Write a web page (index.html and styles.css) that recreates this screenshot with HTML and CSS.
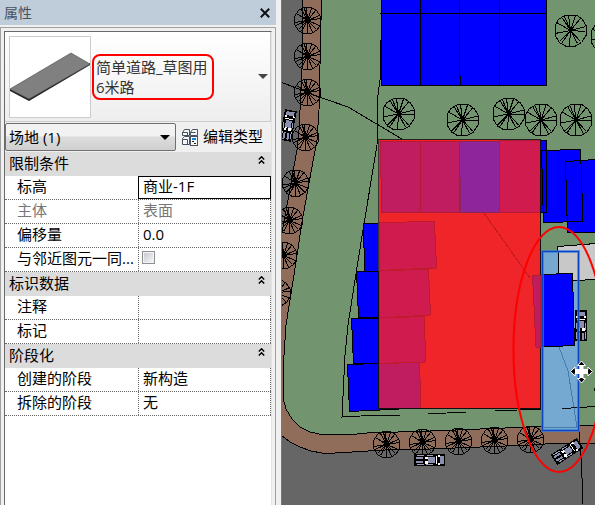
FILE: index.html
```html
<!DOCTYPE html>
<html lang="zh-CN">
<head>
<meta charset="utf-8">
<title>属性</title>
<link rel="stylesheet" href="styles.css">
</head>
<body>
<div class="app">
  <aside class="panel">
    <header class="titlebar"><span>属性</span>
      <svg class="close" width="10" height="10" viewBox="0 0 10 10"><path d="M.8.8 9.2 9.2M9.2.8.8 9.2" stroke="#111" stroke-width="2"/></svg>
    </header>
    <div class="frame"><div class="content">
      <section class="type">
        <svg class="thumb" width="82" height="82" viewBox="0 0 82 82"><rect x=".5" y=".5" width="81" height="81" fill="#fff" stroke="#ccc"/><path d="M1 53v2l19 10 61-36v-2L20 62z" fill="#222"/><path d="M1 53 62 17 81 28 20 63z" fill="#808080" stroke="#555" stroke-width=".7"/></svg>
        <div class="typename"><span>简单道路_草图用</span><span>6米路</span></div>
        <svg class="drop" width="10" height="5"><path d="M0 0h10L5 5z" fill="#444"/></svg>
      </section>
      <section class="filter">
        <div class="combo"><span>场地 (1)</span><svg width="10" height="5"><path d="M0 0h10L5 5z" fill="#000"/></svg></div>
        <svg class="editicon" width="17" height="17" viewBox="0 0 17 17"><g fill="#f5f7f9" stroke="#48525e"><path d="M.5 3.5 2.5.5h5v6H.5zM.5 3.5h5v3M8.5 3.5l2-3h5v6h-7zM8.5 3.500h5M.5 9.500l2-2h5v8h-7zM.5 10.500h5v5"/><rect x="8.500" y="7.500" width="7" height="9"/></g><path d="M10 9h4v2h-4z" fill="#1684d4"/><path d="M10 12h2v1h-2zM12 14h2v1h-2z" fill="#222"/></svg>
        <span>编辑类型</span>
      </section>
      <div class="cat"><span>限制条件</span><svg class="chev" width="7" height="8"><path d="M.8 3.5 3.5.8l2.7 2.7M.8 7.5l2.7-2.7 2.7 2.7"/></svg></div>
      <div class="row"><span>标高</span><span class="active">商业-1F</span></div>
      <div class="row muted"><span>主体</span><span>表面</span></div>
      <div class="row"><span>偏移量</span><span>0.0</span></div>
      <div class="row"><span>与邻近图元一同...</span><span class="checkcell"><i class="check"></i></span></div>
      <div class="cat"><span>标识数据</span><svg class="chev" width="7" height="8"><path d="M.8 3.5 3.5.8l2.7 2.7M.8 7.5l2.7-2.7 2.7 2.7"/></svg></div>
      <div class="row"><span>注释</span><span></span></div>
      <div class="row"><span>标记</span><span></span></div>
      <div class="cat"><span>阶段化</span><svg class="chev" width="7" height="8"><path d="M.8 3.5 3.5.8l2.7 2.7M.8 7.5l2.7-2.7 2.7 2.7"/></svg></div>
      <div class="row"><span>创建的阶段</span><span>新构造</span></div>
      <div class="row"><span>拆除的阶段</span><span>无</span></div>
    </div></div>
  </aside>
  <svg class="map" width="314" height="505" viewBox="281 0 314 505" shape-rendering="crispEdges">
    <defs>
      <g id="tree" fill="none" stroke="#000"><path d="M-5-15.5H6L12-11 15.5-5V5L11 12 5 15.5H-5L-11 12-15.5 5V-5L-12-11zM0 0-2-15.5M0 0-6-14M0 0-8-12.5M0 0 5-15M0 0 10-12M0 0-14-8M0 0 15-4M0 0 15 1M0 0-15.5 3M0 0-11 11M0 0-9 13M0 0-1 15.5M0 0 7 13M0 0 10 11M-2-3 3 3M3-3-3 3"/></g>
      <g id="road-tree" fill="none" stroke="#000"><path d="M-4-13H4L9-10 13-4V4L10 9 4 13H-4L-9 10-13 4V-4L-9-10zM0 0-1-13M0 0-3-12M0 0-6-11M0 0 4-12M0 0 8-10M0 0-11-7M0 0 12-5M0 0 13-2M0 0 12 5M0 0-13 2M0 0-12 5M0 0-9 9M0 0-6 11M0 0 0 13M0 0 5 12M0 0 9 9M-3-3 3 3M3-2-3 3"/></g>
      <g id="car"><rect x="-15.5" y="-6" width="31" height="12" fill="#000"/><path d="M-14-3h7v2h-7zM-14 1h7v2h-7zM-2-3h7v6h-7zM10-4h4v8h-4z" fill="#8b90ae"/><path d="M-5-3h3v2h-3zM-5 1h3v3h-3zM6-4h1v8H6zM8-5h2v2H8zM8 3h2v2H8z" fill="#fff"/><path d="M-13-4.500h7M-3-4.500h6M-13 4.500h7M-4 4.500h7" stroke="#9b9fba"/></g>
    </defs>
    <rect x="281" width="314" height="505" fill="#666"/>
    <path d="M303-1 302 70 299 130 297 150 293 172 288 200 281 238V435L290 442 300 447 311 451 322 453H335L385 450 430 449 530 445 545 444 596 443V-1z" fill="#8f6d5a" stroke="#000"/>
    <path d="M321-1V20L319 110 317 140 309 183 302 222 296 262 290 300 286 325 283 370V398L286 409 292 419 300 427 310 432 324 435 357 434 367 433 430 431 530 427 596 425V-1z" fill="#72946f" stroke="#000"/>
    <path d="M380 40V80L378 95 377 145 363 230 355 280 348 325 345 355 342 417 370 415.5H400M428 413.500 466 412.500M495 410.500 541 409.500M561 408.500 596 406.500M560 149.500h21M594 388v3" fill="none" stroke="#000"/>
    <path d="M282 82.500 318 96.500 348 107 402 139" fill="none" stroke="#000"/>
    <g fill="#00f" stroke="#000"><path d="M381.500-1H546.500V85.500H381.500z"/><path d="M380 13.500H546.500M420.500 0V85.500M459.500 0V76L460.500 77V85.500M499.500 0V85.500"/><path d="M540 140.500h6V212.500h-6zM541.500 150.500 580.500 149.500 583 221.500 543.500 222.500zM565.500 161.500 596 159.500V232.500L567.500 232.500z"/><path d="M580.500 149.500 583 221.500H567" fill="none"/></g>
    <use href="#tree" x="398.500" y="114"/><use href="#tree" x="570.500" y="30.500"/><use href="#tree" x="606.500" y="37"/><use href="#tree" x="462.500" y="120"/><use href="#tree" x="508.500" y="114"/><use href="#tree" x="541" y="120"/><use href="#tree" x="576" y="120"/>
    <g fill="#00f" stroke="#000"><path d="M363.500 223.500H379V271H364.500zM356.500 271.500H379V317.500H358.500zM351.500 318.500H379V363.500H353.500zM347.500 364.500 379 363.500V408H417L390 409.500 349.500 411.500z"/></g>
    <path d="M378.500 139.500H540.500V408.500H378.500z" fill="#ef2529" stroke="#222"/>
    <path d="M379 140.500H540" stroke="#ff1b18"/>
    <path d="M380.500 141.500H459.500V212.500H381.500z" fill="#c01c60" stroke="#b21b35"/><path d="M420.500 142V212" stroke="#b21b35"/>
    <path d="M459.500 141.500H499.500V212.500H460.500z" fill="#8f259b" stroke="#8c2455"/><path d="M499.500 140.500H540V212.500H499.500z" fill="#cf1b4e" stroke="#b21b35"/>
    <g fill="#cf1b4e" stroke="#c01b2b"><path d="M379 222.500 434.500 221.500 436.500 268 379 270.500zM379 270.500 428.500 269.500 430.500 315 379 318zM379 318 424.500 316.500 425.500 362 379 363.500z"/><path d="M379 363.500 419.500 362.500 421 408H379z" fill="#c01c60"/></g>
    <path d="M484 213 530 278" stroke="#c4181d"/>
    <path d="M378.500 139V408.500" stroke="#3b3434" fill="none"/><path d="M378.500 271V408.500H540.500V139" stroke="#111" fill="none"/>
    <path d="M557.500 246.500 596 243.500V279.500L574 280.500H558.500z" fill="#c8c8c8" stroke="#000"/>
    <path d="M543 252H558V280H579V430H543z" fill="#76a9d2"/>
    <path d="M558 252h20v28h-20z" fill="#c8c8c8"/><path d="M558.500 252v22M573 280.500h6" stroke="#000"/>
    <path d="M541 274.500 572.500 273.500 574.500 345.500 541 347z" fill="#00f" stroke="#000"/>
    <path d="M532.500 275.500H540V347H536z" fill="#c01c60" stroke="#b21b35"/>
    <path d="M559 347 568 371 573 402 577 427M544 427h34" fill="none" stroke="#477bab"/><path d="M562 408.500 580 407.500" stroke="#111"/>
    <path d="M579.500 431V443L581.500 460V472L582.500 483 582 505" fill="none" stroke="#000"/>
    <use href="#road-tree" x="307.500" y="20.500"/><use href="#road-tree" x="307.500" y="56.500"/><use href="#road-tree" x="307.500" y="92.500"/><use href="#road-tree" x="305.500" y="137.500"/><use href="#road-tree" x="295.500" y="183"/><use href="#road-tree" x="289.500" y="220.500"/><use href="#road-tree" x="283.500" y="255.500"/><use href="#road-tree" x="277" y="293"/>
    <use href="#road-tree" x="386.500" y="444.500"/><use href="#road-tree" x="422.500" y="442.500"/><use href="#road-tree" x="458.500" y="441.500"/><use href="#road-tree" x="494.500" y="440.500"/><use href="#road-tree" x="530.500" y="439.500"/>
    <use href="#car" transform="translate(429.500 460)"/><use href="#car" transform="translate(567 451.500) rotate(-33)"/><use href="#car" transform="translate(581 325.500) rotate(-90)"/><use href="#car" transform="translate(288 125.500) rotate(-79)"/>
    <rect x="542.500" y="251.500" width="36" height="179" fill="none" stroke="#3478d8" stroke-opacity=".7" stroke-width="3"/><rect x="542.500" y="251.500" width="36" height="179" fill="none" stroke="#0b43c5"/>
    <g shape-rendering="auto"><ellipse cx="559" cy="349.500" rx="45.500" ry="122.500" fill="none" stroke="#f00" stroke-width="2"/><path d="m581.500 361 4 4.500h-2.500v4h5v-2.500l4.500 4.500-4.500 4.500v-2.500h-5v5h2.500l-4 4.500-4-4.500h2.500v-5h-5v2.500l-4.500-4.500 4.500-4.500v2.500h5v-4h-2.500z" fill="#000" stroke="#fff" stroke-width="1"/><path d="M581.500 365v13M575 371.500h13" stroke="#fff" stroke-width="3"/></g>
    <path d="M281.500 0V505" stroke="#777"/>
  </svg>
</div>
</body>
</html>
```
FILE: styles.css
```css
* { box-sizing: border-box; }
body { margin: 0; overflow: hidden; background: #f0f0f0; color: #000; font: 15px/20px "Open Sans", "Noto Sans CJK SC", sans-serif; }
svg { display: block; flex: none; }
.app { display: flex; width: 595px; height: 505px; }
.panel { display: flex; flex-direction: column; width: 281px; height: 505px; padding-right: 5px; }
.titlebar { display: flex; align-items: center; justify-content: space-between; height: 25px; padding: 0 6px 0 4px; background: #bfcddb; color: #46515d; font-size: 14px; line-height: 18px; }
.frame { flex: 1; margin-top: 2px; border: solid #a0a0a0; border-width: 1px 1px 0; padding: 3px 3px 0; }
.content { height: 100%; border: solid #696969; border-width: 1px 0 0 1px; background: #fff; border-right: 1px solid #e3e3e3; }
.type { display: flex; align-items: center; height: 90px; padding: 0 2px 0 4px; border: solid #ccc; border-width: 0 1px 1px 0; background: linear-gradient(#fff, #eee); }
.typename { display: flex; flex-direction: column; width: 122px; height: 46px; margin-left: 1px; padding: 1px 2px; border: 2px solid #f00; border-radius: 8px; color: #333; white-space: nowrap; }
.drop { margin-left: auto; }
.filter { display: flex; align-items: center; height: 30px; background: #f0f0f0; }
.combo { display: flex; align-items: center; justify-content: space-between; width: 171px; height: 28px; padding: 0 5px 0 3px; border: 1px solid #707070; border-radius: 2px; background: linear-gradient(#f2f2f2 0 45%, #ddd 50%, #cfcfcf); }
.editicon { margin: 0 4px 0 6px; }
.filter > span { position: relative; top: -1px; }
.cat { display: flex; justify-content: space-between; height: 24px; padding: 1px 6px 0 4px; background: #dcdcdc; line-height: 20px; }
.chev { margin-top: 3px; fill: none; stroke: #000; stroke-width: 1.5; }
.row { display: grid; grid-template-columns: 133px 133px; height: 24px; border-bottom: 1px dotted #666; line-height: 20px; white-space: nowrap; }
.row > span { padding-left: 12px; }
.row > span + span { padding-left: 4px; border: dotted #666; border-width: 0 1px; }
.row > .active { border: 1px solid #000 !important; line-height: 18px; }
.muted { color: #777; }
.row > .checkcell { padding-top: 3px; }
.check { display: block; width: 13px; height: 13px; margin-left: -1px; border: 1px solid #8e8f8f; background: linear-gradient(135deg, #c5c8cf, #f8f8f8); box-shadow: inset 0 0 0 1px #f4f4f4; }
```
